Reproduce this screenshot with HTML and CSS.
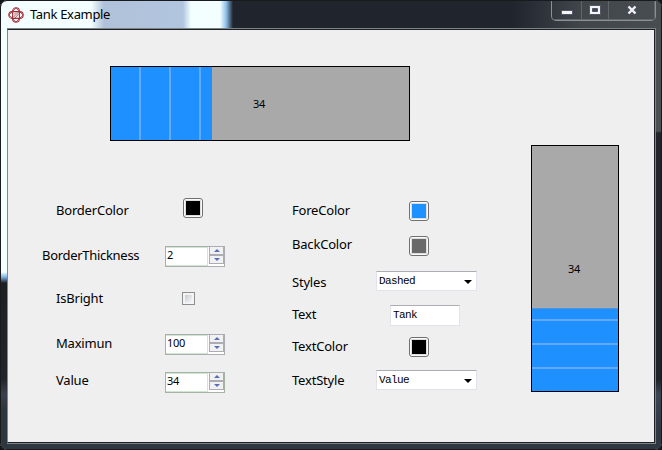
FILE: index.html
```html
<!DOCTYPE html>
<html lang="en">
<head>
<meta charset="utf-8">
<title>Tank Example</title>
<link rel="stylesheet" href="styles.css">
</head>
<body>
<div class="window">
  <header class="titlebar">
    <svg class="app-icon" width="16" height="16" viewBox="0 0 16 16" fill="none" stroke="#a82c36" stroke-width="1.1">
      <rect x="4.6" y=".8" width="6.8" height="14.4" rx="3.4"/>
      <rect x=".8" y="4.6" width="14.4" height="6.8" rx="3.4"/>
      <path d="M8 1 15 8 8 15 1 8ZM5 10.5 10.5 5M6.5 11.5 11 6.5M6 7.5 8 5.5" stroke-width=".8"/>
    </svg>
    <h1>Tank Example</h1>
    <div class="caption">
      <span class="cap min"><svg width="12" height="12" viewBox="0 0 12 12"><rect x=".5" y="6.5" width="11" height="4" fill="#f5f5f5" stroke="#53566a"/></svg></span>
      <span class="cap max"><svg width="12" height="10" viewBox="0 0 12 10"><path fill-rule="evenodd" d="M.5.5h11v9H.5ZM3.5 3.5v3h5v-3Z" fill="#f5f5f5" stroke="#53566a"/></svg></span>
      <span class="cap close"><svg width="12" height="10" viewBox="0 0 12 10"><path d="M2.5 1.5 9.5 8.5M9.5 1.5 2.5 8.5" stroke="#53566a" stroke-width="4"/><path d="M2.5 1.5 9.5 8.5M9.5 1.5 2.5 8.5" stroke="#f5f5f5" stroke-width="2.2"/></svg></span>
    </div>
  </header>
  <main class="client">
    <div class="left">
      <div class="tank horizontal"><div class="fill"></div><span class="value">34</span></div>
      <div class="forms">
        <div class="form props">
          <div class="row border-color"><label>BorderColor</label><span class="swatch black"></span></div>
          <div class="row thickness"><label>BorderThickness</label><span class="spin"><span class="num">2</span><span class="arrows"><i class="up"></i><i class="down"></i></span></span></div>
          <div class="row bright"><label>IsBright</label><span class="check"></span></div>
          <div class="row maximum"><label>Maximun</label><span class="spin"><span class="num">100</span><span class="arrows"><i class="up"></i><i class="down"></i></span></span></div>
          <div class="row amount"><label>Value</label><span class="spin focused"><span class="num">34</span><span class="arrows"><i class="up"></i><i class="down"></i></span></span></div>
        </div>
        <div class="form looks">
          <div class="row fore"><label>ForeColor</label><span class="swatch blue"></span></div>
          <div class="row back"><label>BackColor</label><span class="swatch gray"></span></div>
          <div class="row styles"><label>Styles</label><span class="field combo">Dashed<i></i></span></div>
          <div class="row text"><label>Text</label><span class="field input">Tank</span></div>
          <div class="row text-color"><label>TextColor</label><span class="swatch black"></span></div>
          <div class="row text-style"><label>TextStyle</label><span class="field combo">Value<i></i></span></div>
        </div>
      </div>
    </div>
    <div class="tank vertical"><div class="fill"></div><span class="value">34</span></div>
  </main>
</div>
</body>
</html>
```
FILE: styles.css
```css
* { box-sizing: border-box; }
body { margin: 0; background: #15161a; font-family: "Noto Sans", sans-serif; color: #000; }

.window {
  display: grid;
  grid-template: 28px 414px / 648px;
  width: 662px; height: 450px;
  padding: 0 6px 6px 6px;
  border: 1px solid #8b9095;
  border-radius: 7px;
  outline: 1px solid #191a1d;
  outline-offset: -1px;
  background:
    linear-gradient(90deg, #f3ffff 0, #f3ffff 90px, #b0c2d9 103px, #b2c5df 182px, #f3ffff 190px, #f3ffff 219px, #8fc2eb 225px, #20252d 232px, #1f242d 510px, #41464b 580px, #484d51 100%) 0 0 / 100% 28px no-repeat,
    linear-gradient(#f3ffff 0, #f3ffff 243px, #7eb4e4 248px, #1d2023 254px, #23242b 350px, #3b414c 365px, #2e3640 380px) 0 28px / 7px 100% no-repeat,
    linear-gradient(#4a4f53 0, #4a4f53 102px, #22242c 104px, #1e2229 350px, #3b4553 365px, #2f3743 400px) 100% 28px / 7px 100% no-repeat,
    #2f3740;
}

.titlebar { display: flex; align-items: flex-start; }
.app-icon { margin: 6px 0 0 1px; }
h1 { margin: 3px 0 0 6px; font-size: 13px; line-height: 20px; font-weight: 400; letter-spacing: -.33px; }
.caption {
  display: flex; width: 105px; height: 20px;
  margin: 0 -1px 0 auto;
  border: 1px solid #8b9095; border-top: 0;
  border-radius: 0 0 5px 5px;
}
.cap { display: flex; align-items: center; justify-content: center; border: 1px solid #62666a; border-top: 0; border-left: 0; }
.cap.min { width: 30px; }
.cap.max { width: 27px; }
.cap.close { flex: 1; }
.cap svg { display: block; }

.client {
  display: flex;
  background: #efefef;
  border: 1px solid #1c2024;
  border-left-color: #82878a;
  box-shadow: 0 0 0 1px #7e8385;
  clip-path: inset(-1px -1px -1px 0);
}
.left { width: 523px; }

.tank { display: grid; border: 1px solid #000; background: #a9a9a9; }
.tank > * { grid-area: 1 / 1; }
.value { place-self: center; font-size: 11px; line-height: 14px; letter-spacing: -.3px; padding-right: 2px; }
.horizontal { width: 300px; height: 75px; margin: 36px 0 0 102px; }
.horizontal .fill {
  width: 101px;
  background: repeating-linear-gradient(90deg, #1e90ff 0 28px, #62a9ff 28px 30px);
}
.vertical { width: 88px; height: 247px; margin-top: 115px; }
.vertical .fill {
  height: 83px; align-self: end;
  border-top: 1px solid #4f96e0;
  background: repeating-linear-gradient(0deg, #1e90ff 0 22px, #62a9ff 22px 24px);
}

.forms { display: flex; padding-top: 49px; }
.form { display: flex; flex-direction: column; }
.props { width: 250px; padding-left: 34px; }
.looks { padding-left: 34px; }
.row { display: flex; align-items: center; }
label { font-size: 13px; line-height: 18px; white-space: nowrap; letter-spacing: -.2px; padding-bottom: 2px; }
.props label { width: 123px; padding-left: 14px; }
.props .thickness label { padding-left: 0; letter-spacing: -.3px; }
.looks label { width: 84px; }

.border-color { height: 42px; }
.border-color .swatch { margin: 0 0 6px 18px; }
.thickness { height: 47px; }
.thickness .spin { margin-top: 2px; }
.bright { height: 39px; }
.bright .check { margin-left: 17px; }
.maximum { height: 51px; }
.maximum .spin { margin-top: 2px; }
.amount { height: 24px; }
.amount .spin { margin-top: 2px; }

.fore { height: 42px; }
.back { height: 25px; }
.back .swatch { margin-top: 3px; }
.looks .swatch { margin-left: 33px; }
.styles { height: 52px; }
.styles .field { margin-bottom: 4px; }
.text { height: 11px; }
.text .field { margin: 2px 0 0 14px; }
.text-color { height: 54px; }
.text-style { height: 13px; }
.text-style .field { margin-bottom: 1px; }

.swatch {
  width: 20px; height: 20px; flex: none;
  border: 1px solid #707070; border-radius: 3px;
  padding: 2px; background: #fafafa;
}
.swatch::before { content: ""; display: block; width: 14px; height: 14px; background: currentColor; outline: 1px solid #dedede; }
.black { color: #000; }
.blue { color: #1e90ff; }
.gray { color: #696969; }

.spin {
  display: flex; width: 60px; height: 21px; flex: none;
  border: 1px solid #abadb3; background: #fff;
}
.spin.focused { border-color: #a4b3a6; }
.num { width: 42px; height: 19px; border: 1px solid #cde8cf; border-left-width: 0; padding-left: 1px; font-size: 11px; line-height: 13px; letter-spacing: -.3px; }
.arrows { display: flex; flex-direction: column; width: 15px; height: 17px; margin: 0 0 0 1px; border: 1px solid #abadb3; border-top: 0; }
.arrows i { display: flex; height: 8px; align-items: center; justify-content: center; background: #f1f1f1; }
.arrows .up { border-bottom: 1px solid #abadb3; }
.arrows .down { border-top: 1px solid #abadb3; }
.arrows i::before { content: ""; border: solid transparent; border-width: 0 3px; }
.arrows .up::before { border-bottom: 3px solid #566fbd; }
.arrows .down::before { border-top: 3px solid #566fbd; }

.check { width: 13px; height: 13px; border: 1px solid #8e8f8f; background: linear-gradient(135deg, #c6cbd1, #f6f6f6) content-box, #f4f4f4; padding: 2px; }

.field {
  display: flex; height: 20px; flex: none;
  border: 1px solid #e2e3ea; border-top-color: #abadb3;
  background: #fff; padding-left: 2px;
  font: 11px/18px "Liberation Mono", monospace;
  letter-spacing: -.6px;
}
.combo { width: 101px; }
.input { width: 70px; height: 21px; }
.combo i { margin: 8px 4px 0 auto; height: 4px; border: solid transparent; border-width: 4px 4px 0; border-top-color: #000; }
```
